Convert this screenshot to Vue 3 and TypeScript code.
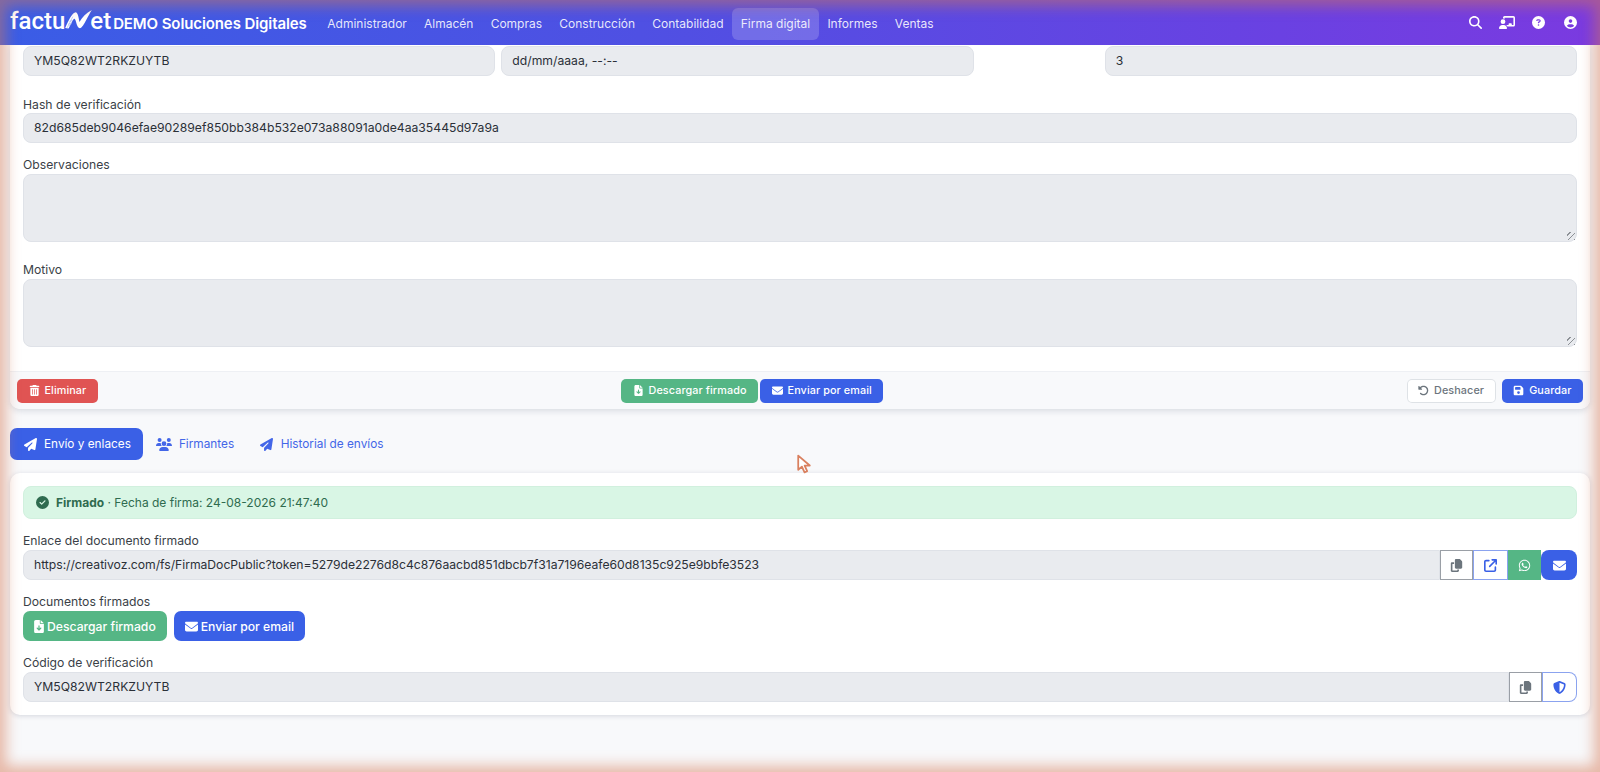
<script setup lang="ts">
const ic = {
  plane: 'M498.1 5.6c10.1 7 15.4 19.1 13.5 31.2l-64 416c-1.5 9.7-7.4 18.2-16 23s-18.9 5.4-28 1.6L284 427.7l-68.5 74.1c-8.9 9.7-22.9 12.9-35.2 8.1S160 493.2 160 480V396.4c0-4 1.5-7.8 4.2-10.7L331.8 202.8c5.8-6.3 5.6-16-.4-22s-15.7-6.4-22-.7L106 360.8 17.7 316.6C7.1 311.3 .3 300.7 0 288.9s5.9-22.8 16.1-28.7l448-256c10.7-6.1 23.9-5.5 34 1.4z',
  users: 'M144 0a80 80 0 1 1 0 160A80 80 0 1 1 144 0zM512 0a80 80 0 1 1 0 160A80 80 0 1 1 512 0zM0 298.7C0 239.8 47.8 192 106.7 192h42.7c15.9 0 31 3.5 44.6 9.7c-1.3 7.2-1.9 14.7-1.9 22.3c0 38.2 16.8 72.5 43.3 96c-.2 0-.4 0-.7 0H21.3C9.6 320 0 310.4 0 298.7zM405.3 320c-.2 0-.4 0-.7 0c26.6-23.5 43.3-57.8 43.3-96c0-7.6-.7-15-1.9-22.3c13.6-6.3 28.7-9.7 44.6-9.7h42.7C592.2 192 640 239.8 640 298.7c0 11.8-9.6 21.3-21.3 21.3H405.3zM224 224a96 96 0 1 1 192 0 96 96 0 1 1 -192 0zM128 485.3C128 411.7 187.7 352 261.3 352H378.7C452.3 352 512 411.7 512 485.3c0 14.7-11.9 26.7-26.7 26.7H154.7c-14.7 0-26.7-11.9-26.7-26.7z',
  mail: 'M48 64C21.5 64 0 85.5 0 112c0 15.1 7.1 29.3 19.2 38.4L236.8 313.6c11.4 8.5 27 8.5 38.4 0L492.8 150.4c12.1-9.1 19.2-23.3 19.2-38.4c0-26.5-21.5-48-48-48H48zM0 176V384c0 35.3 28.7 64 64 64H448c35.3 0 64-28.7 64-64V176L294.4 339.2c-22.8 17.1-54 17.1-76.8 0L0 176z',
  trash: 'M135.2 17.7C140.6 6.8 151.7 0 163.8 0H284.2c12.1 0 23.2 6.8 28.6 17.7L320 32h96c17.7 0 32 14.3 32 32s-14.3 32-32 32H32C14.3 96 0 81.7 0 64S14.3 32 32 32h96l7.2-14.3zM32 128H416V448c0 35.3-28.7 64-64 64H96c-35.3 0-64-28.7-64-64V128zm96 64c-8.8 0-16 7.2-16 16V432c0 8.8 7.2 16 16 16s16-7.2 16-16V208c0-8.8-7.2-16-16-16zm96 0c-8.8 0-16 7.2-16 16V432c0 8.8 7.2 16 16 16s16-7.2 16-16V208c0-8.8-7.2-16-16-16zm96 0c-8.8 0-16 7.2-16 16V432c0 8.8 7.2 16 16 16s16-7.2 16-16V208c0-8.8-7.2-16-16-16z',
  file: 'M64 0C28.7 0 0 28.7 0 64V448c0 35.3 28.7 64 64 64H320c35.3 0 64-28.7 64-64V160H256c-17.7 0-32-14.3-32-32V0H64zM256 0V128H384L256 0zM216 232V334.1l31-31c9.4-9.4 24.6-9.4 33.9 0s9.4 24.6 0 33.9l-72 72c-9.4 9.4-24.6 9.4-33.9 0l-72-72c-9.4-9.4-9.4-24.6 0-33.9s24.6-9.4 33.9 0l31 31V232c0-13.3 10.7-24 24-24s24 10.7 24 24z',
  undo: 'M48.5 224H40c-13.3 0-24-10.7-24-24V72c0-9.7 5.8-18.5 14.8-22.2s19.3-1.7 26.2 5.2L98.6 96.6c87.6-86.5 228.7-86.2 315.8 1c87.5 87.5 87.5 229.3 0 316.8s-229.3 87.5-316.8 0c-12.5-12.5-12.5-32.8 0-45.3s32.8-12.5 45.3 0c62.5 62.5 163.8 62.5 226.3 0s62.5-163.8 0-226.3c-62.2-62.2-162.7-62.5-225.3-1L185 183c6.9 6.9 8.9 17.2 5.2 26.2s-12.5 14.8-22.2 14.8H48.5z',
  save: 'M64 32C28.7 32 0 60.7 0 96V416c0 35.3 28.7 64 64 64H384c35.3 0 64-28.7 64-64V173.3c0-17-6.7-33.3-18.7-45.3L352 50.7C340 38.7 323.7 32 306.7 32H64zm0 96c0-17.7 14.3-32 32-32H288c17.7 0 32 14.3 32 32v64c0 17.7-14.3 32-32 32H96c-17.7 0-32-14.3-32-32V128zM224 288a64 64 0 1 1 0 128 64 64 0 1 1 0-128z',
  check: 'M256 512A256 256 0 1 0 256 0a256 256 0 1 0 0 512zM369 209L241 337c-9.4 9.4-24.6 9.4-33.9 0l-64-64c-9.4-9.4-9.4-24.6 0-33.9s24.6-9.4 33.9 0l47 47L335 175c9.4-9.4 24.6-9.4 33.9 0s9.4 24.6 0 33.9z',
  copy: 'M208 0H332.1c12.7 0 24.9 5.1 33.9 14.1l67.9 67.9c9 9 14.1 21.2 14.1 33.9V336c0 26.5-21.5 48-48 48H208c-26.5 0-48-21.5-48-48V48c0-26.5 21.5-48 48-48zM48 128h80v64H64V448H256V416h64v48c0 26.5-21.5 48-48 48H48c-26.5 0-48-21.5-48-48V176c0-26.5 21.5-48 48-48z',
  ext: 'M320 0c-17.7 0-32 14.3-32 32s14.3 32 32 32h82.7L201.4 265.4c-12.5 12.5-12.5 32.8 0 45.3s32.8 12.5 45.3 0L448 109.3V192c0 17.7 14.3 32 32 32s32-14.3 32-32V32c0-17.7-14.3-32-32-32H320zM80 32C35.8 32 0 67.8 0 112V432c0 44.2 35.8 80 80 80H400c44.2 0 80-35.8 80-80V320c0-17.7-14.3-32-32-32s-32 14.3-32 32V432c0 8.8-7.2 16-16 16H80c-8.8 0-16-7.2-16-16V112c0-8.8 7.2-16 16-16H192c17.7 0 32-14.3 32-32s-14.3-32-32-32H80z',
  wa: 'M380.9 97.1C339 55.1 283.2 32 223.9 32c-122.4 0-222 99.6-222 222 0 39.1 10.2 77.3 29.6 111L0 480l117.7-30.9c32.4 17.7 68.9 27 106.1 27h.1c122.3 0 224.1-99.6 224.1-222 0-59.3-25.2-115-67.1-157zm-157 341.6c-33.2 0-65.7-8.9-94-25.7l-6.7-4-69.8 18.3L72 359.2l-4.4-7c-18.5-29.4-28.2-63.3-28.2-98.2 0-101.7 82.8-184.5 184.6-184.5 49.3 0 95.6 19.2 130.4 54.1 34.8 34.9 56.2 81.2 56.1 130.5 0 101.8-84.9 184.6-186.6 184.6zm101.2-138.2c-5.5-2.8-32.8-16.2-37.9-18-5.1-1.9-8.8-2.8-12.5 2.8-3.7 5.6-14.3 18-17.6 21.8-3.2 3.7-6.5 4.2-12 1.4-32.6-16.3-54-29.1-75.5-66-5.7-9.8 5.7-9.1 16.3-30.3 1.8-3.7.9-6.9-.5-9.7-1.4-2.8-12.5-30.1-17.1-41.2-4.5-10.8-9.1-9.3-12.5-9.5-3.2-.2-6.9-.2-10.6-.2-3.7 0-9.7 1.4-14.8 6.9-5.1 5.6-19.4 19-19.4 46.3 0 27.3 19.9 53.7 22.6 57.4 2.8 3.7 39.1 59.7 94.8 83.8 35.2 15.2 49 16.5 66.6 13.9 10.7-1.6 32.8-13.4 37.4-26.4 4.6-13 4.6-24.1 3.2-26.4-1.3-2.5-5-3.9-10.5-6.6z',
  shield: 'M256 0c4.6 0 9.2 1 13.4 2.9L457.7 82.8c22 9.3 38.4 31 38.3 57.2c-.5 99.2-41.3 280.7-213.6 363.2c-16.7 8-36.1 8-52.8 0C57.3 420.7 16.5 239.2 16 140c-.1-26.2 16.3-47.9 38.3-57.2L242.7 2.9C246.8 1 251.4 0 256 0zm0 66.8V444.8C394 378 431.1 230.1 432 141.4L256 66.8l0 0z',
  search: 'M416 208c0 45.9-14.9 88.3-40 122.7L502.6 457.4c12.5 12.5 12.5 32.8 0 45.3s-32.8 12.5-45.3 0L330.7 376c-34.4 25.2-76.8 40-122.7 40C93.1 416 0 322.9 0 208S93.1 0 208 0S416 93.1 416 208zM208 352a144 144 0 1 0 0-288 144 144 0 1 0 0 288z',
  board: 'M160 64c0-35.3 28.7-64 64-64H576c35.3 0 64 28.7 64 64V352c0 35.3-28.7 64-64 64H336.8c-11.8-25.5-29.9-47.5-52.4-64H384V320c0-17.7 14.3-32 32-32h64c17.7 0 32 14.3 32 32v32h64V64L224 64v49.1C205.2 102.2 183.3 96 160 96V64zm0 64a96 96 0 1 1 0 192 96 96 0 1 1 0-192zM133.3 352h53.3C260.3 352 320 411.7 320 485.3c0 14.7-11.9 26.7-26.7 26.7H26.7C11.9 512 0 500.1 0 485.3C0 411.7 59.7 352 133.3 352z',
  help: 'M256 512A256 256 0 1 0 256 0a256 256 0 1 0 0 512zM169.8 165.3c7.9-22.3 29.1-37.3 52.8-37.3h58.3c34.9 0 63.1 28.3 63.1 63.1c0 22.6-12.1 43.5-31.7 54.8L280 264.4c-.2 13-10.9 23.6-24 23.6c-13.3 0-24-10.7-24-24V250.5c0-8.6 4.6-16.5 12.1-20.8l44.3-25.4c4.7-2.7 7.6-7.7 7.6-13.1c0-8.4-6.8-15.1-15.1-15.1H222.6c-3.4 0-6.4 2.1-7.5 5.3l-.4 1.2c-4.4 12.5-18.2 19-30.6 14.6s-19-18.2-14.6-30.6l.4-1.2zM224 352a32 32 0 1 1 64 0 32 32 0 1 1 -64 0z',
  user: 'M399 384.2C376.9 345.8 335.4 320 288 320H224c-47.4 0-88.9 25.8-111 64.2c35.2 39.2 86.2 63.8 143 63.8s107.8-24.7 143-63.8zM0 256a256 256 0 1 1 512 0A256 256 0 1 1 0 256zm256 16a72 72 0 1 0 0-144 72 72 0 1 0 0 144z',
}
const navItems = ['Administrador', 'Almacén', 'Compras', 'Construcción', 'Contabilidad', 'Firma digital', 'Informes', 'Ventas']
const url = 'https://creativoz.com/fs/FirmaDocPublic?token=5279de2276d8c4c876aacbd851dbcb7f31a7196eafe60d8135c925e9bbfe3523'
</script>

<template>
  <div class="page">
    <header class="nav">
      <div class="logo">
        <span>factu</span>
        <svg class="logo-n" viewBox="0 0 28 20">
          <path fill="#fff" d="M0 19 C3 12 7 3 10.500 2.500 C13.500 2 14 8 15 12.500 C18 7.500 22 3 28 0 C26 3 25 5.500 23.500 8 C21.500 12 19.500 16 17 18.500 C14.500 20.500 12.500 17.500 11.500 13 C10.800 10 10 8.500 9 9.500 C7 12 5.500 16 3.500 19.500 Z" />
          <path fill="none" stroke="#9fb2f2" stroke-width=".7" d="M2 18.800 L8 7 M4 17 L6 15 M3 15 L7 14 M4.500 12 L8 11" />
        </svg>
        <span>et</span>
      </div>
      <span class="brand">DEMO Soluciones Digitales</span>
      <nav class="menu">
        <a v-for="n in navItems" :key="n" :class="{ on: n === 'Firma digital' }">{{ n }}</a>
      </nav>
      <div class="tools">
        <svg viewBox="0 0 512 512"><path :d="ic.search" /></svg>
        <svg class="wide" viewBox="0 0 640 512"><path :d="ic.board" /></svg>
        <svg viewBox="0 0 512 512"><path :d="ic.help" /></svg>
        <svg class="end" viewBox="0 0 512 512"><path :d="ic.user" /></svg>
      </div>
    </header>

    <main class="content">
      <section class="form-card">
        <div class="form-body">
          <div class="row-top">
            <div class="fake">YM5Q82WT2RKZUYTB</div>
            <div class="fake">dd/mm/aaaa, --:--</div>
            <div></div>
            <div class="fake">3</div>
          </div>
          <label class="lab hash">Hash de verificación</label>
          <div class="fake">82d685deb9046efae90289ef850bb384b532e073a88091a0de4aa35445d97a9a</div>
          <label class="lab near">Observaciones</label>
          <div class="fake area"><i class="grip"></i></div>
          <label class="lab">Motivo</label>
          <div class="fake area"><i class="grip"></i></div>
        </div>
        <div class="form-foot">
          <button class="sm red"><svg viewBox="0 0 448 512"><path :d="ic.trash" /></svg>Eliminar</button>
          <div class="foot-group mid">
            <button class="sm green"><svg viewBox="0 0 384 512"><path :d="ic.file" /></svg>Descargar firmado</button>
            <button class="sm blue"><svg viewBox="0 0 512 512"><path :d="ic.mail" /></svg>Enviar por email</button>
          </div>
          <div class="foot-group">
            <button class="sm ghost"><svg viewBox="0 0 512 512"><path :d="ic.undo" /></svg>Deshacer</button>
            <button class="sm blue"><svg viewBox="0 0 448 512"><path :d="ic.save" /></svg>Guardar</button>
          </div>
        </div>
      </section>

      <div class="tabs">
        <a class="tab active"><svg class="t-plane" viewBox="0 0 512 512"><path :d="ic.plane" /></svg>Envío y enlaces</a>
        <a class="tab"><svg class="t-wide" viewBox="0 0 640 512"><path :d="ic.users" /></svg>Firmantes</a>
        <a class="tab"><svg class="t-plane" viewBox="0 0 512 512"><path :d="ic.plane" /></svg>Historial de envíos</a>
      </div>

      <section class="send-card">
        <div class="alert">
          <svg viewBox="0 0 512 512"><path :d="ic.check" /></svg>
          <b>Firmado</b>
          <span>&nbsp;· Fecha de firma: 24-08-2026 21:47:40</span>
        </div>
        <label class="lab tight">Enlace del documento firmado</label>
        <div class="group">
          <div class="fake grow link">{{ url }}</div>
          <button class="ib gray"><svg viewBox="0 0 448 512"><path :d="ic.copy" /></svg></button>
          <button class="ib outline"><svg viewBox="0 0 512 512"><path :d="ic.ext" /></svg></button>
          <button class="ib wa"><svg viewBox="0 0 448 512"><path :d="ic.wa" /></svg></button>
          <button class="ib mail"><svg viewBox="0 0 512 512"><path :d="ic.mail" /></svg></button>
        </div>
        <label class="lab tight">Documentos firmados</label>
        <div class="docs">
          <button class="md green"><svg class="narrow" viewBox="0 0 384 512"><path :d="ic.file" /></svg>Descargar firmado</button>
          <button class="md blue"><svg viewBox="0 0 512 512"><path :d="ic.mail" /></svg>Enviar por email</button>
        </div>
        <label class="lab tight">Código de verificación</label>
        <div class="group">
          <div class="fake grow">YM5Q82WT2RKZUYTB</div>
          <button class="ib gray"><svg viewBox="0 0 448 512"><path :d="ic.copy" /></svg></button>
          <button class="ib outline last"><svg viewBox="0 0 512 512"><path :d="ic.shield" /></svg></button>
        </div>
      </section>
    </main>

    <svg class="cursor" viewBox="0 0 14 20">
      <path d="M1.500 1.500 L1.500 15 L5 12 L7.500 17.500 L10 16.400 L7.600 11 L12.500 11 Z" fill="#fff" stroke="#d9805f" stroke-width="1.700" stroke-linejoin="round" />
    </svg>
    <div class="glow"></div>
  </div>
</template>

<style>
html, body { margin: 0; background: #f8f9fb; }
</style>

<style scoped>
.page {
  position: relative;
  width: 1600px;
  height: 772px;
  overflow: hidden;
  background: #f8f9fb;
  font-family: Inter, "Liberation Sans", sans-serif;
  font-size: 12.200px;
  color: #2b3038;
}
svg { fill: currentColor; display: block; flex: none; }

.nav {
  display: flex;
  align-items: center;
  height: 45px;
  padding: 3px 10px 0;
  box-sizing: border-box;
  color: #fff;
  background: linear-gradient(90deg, #3a5de6 0%, #4f50e3 40%, #6a41e2 80%, #7b3ae0 100%);
  position: relative;
  z-index: 2;
}
.logo {
  display: flex;
  align-items: center;
  font-family: Roboto, sans-serif;
  font-size: 24px;
  font-weight: 500;
  margin-top: -7px;
}
.logo-n { width: 27px; height: 19px; margin: -3px -2px 0 0; }
.brand { margin-left: 2px; margin-top: -2px; font-size: 15px; font-weight: 600; letter-spacing: -.1px; }
.menu { display: flex; margin-left: 12px; }
.menu a {
  padding: 0 8.600px;
  height: 32px;
  line-height: 32px;
  border-radius: 6px;
  font-size: 12px;
  color: rgba(255, 255, 255, .88);
}
.menu a.on { background: rgba(255, 255, 255, .18); }
.tools { margin-left: auto; display: flex; align-items: center; gap: 17px; padding-right: 13px; margin-top: -4px; }
.tools svg { width: 13px; height: 13px; }
.tools svg.wide { width: 16px; }
.tools svg.end { margin-left: 2px; }

.content { padding: 0 10px; }

.form-card {
  background: #fff;
  border-radius: 0 0 10px 10px;
  box-shadow: 0 2px 6px rgba(30, 40, 70, .14);
}
.form-body { padding: 1px 13px 24px; }
.row-top { display: grid; grid-template-columns: 1fr 1fr 119px 1fr; gap: 6px; }
.fake {
  box-sizing: border-box;
  height: 30px;
  line-height: 28px;
  padding: 0 10px;
  background: #e9ebef;
  border: 1px solid #dfe2e8;
  border-radius: 8px;
  color: #2b3038;
  white-space: nowrap;
}
.link { letter-spacing: -.03px; }
.area { height: 68px; position: relative; }
.grip {
  position: absolute; right: 1px; bottom: 1px; width: 8px; height: 8px;
  background: repeating-linear-gradient(135deg, transparent 0 2px, #8d9196 2px 3px, transparent 3px 4px);
}
.lab { display: block; height: 16px; line-height: 16px; margin: 20px 0 1px; color: #3a3f47; }
.lab.hash { margin: 21px 0 0; }
.lab.near { margin: 14px 0 1px; }
.lab.tight { margin: 14px 0 1px; }

.form-foot {
  display: flex;
  justify-content: space-between;
  align-items: center;
  height: 38px;
  padding: 0 7px;
  box-sizing: border-box;
  background: #f8f9fb;
  border-top: 1px solid #eef0f4;
  border-radius: 0 0 10px 10px;
}
.foot-group { display: flex; gap: 6px; }
.foot-group.mid { gap: 2px; }

button { font-family: inherit; border: 0; cursor: default; }
.sm {
  display: flex;
  align-items: center;
  gap: 5px;
  height: 24px;
  padding: 0 11.500px;
  border-radius: 5px;
  font-size: 10.800px;
  font-weight: 500;
  letter-spacing: .1px;
}
.sm svg { width: 11px; height: 11px; }
.red { background: #e05453; color: #fff; }
.green { background: #55b685; color: #fff; }
.blue { background: #3a60e6; color: #fff; }
.ghost { background: #fff; color: #6c757d; box-shadow: inset 0 0 0 1px #dee2e6; }

.tabs { display: flex; margin-top: 19px; }
.tab {
  display: flex;
  align-items: center;
  gap: 7px;
  height: 32px;
  padding: 0 12.500px;
  border-radius: 7px;
  color: #4366e8;
  font-size: 11.800px;
}
.tab svg { width: 13px; height: 13px; }
.tab svg.t-plane { margin: 0 .5px 0 1px; }
.tab svg.t-wide { width: 16px; }
.tab.active { background: #3a60e6; color: #fff; }

.send-card {
  margin-top: 13px;
  height: 242px;
  box-sizing: border-box;
  padding: 13px 13px 0;
  background: #fff;
  border-radius: 10px;
  box-shadow: 0 1px 5px rgba(30, 40, 70, .16);
}
.alert {
  display: flex;
  align-items: center;
  height: 33px;
  padding: 0 12px;
  box-sizing: border-box;
  background: #d9f6e5;
  border: 1px solid #d1f0de;
  border-radius: 8px;
  color: #2f6b4f;
  font-size: 12px;
}
.alert svg { width: 13px; height: 13px; margin-right: 7px; }
.group { display: flex; height: 30px; }
.grow { flex: 1; border-radius: 8px 0 0 8px; overflow: hidden; }
.ib {
  width: 33px;
  height: 30px;
  padding: 0;
  display: flex;
  align-items: center;
  justify-content: center;
  background: #fff;
}
.ib svg { width: 13px; height: 13px; }
.ib.gray { color: #6c757d; box-shadow: inset 0 0 0 1px #9a9fa6; }
.ib.outline { color: #3a60e6; box-shadow: inset 0 0 0 1px #8ba3ef; width: 35px; }
.ib.outline.last { border-radius: 0 8px 8px 0; }
.ib.wa { background: #55b685; color: #fff; }
.ib.mail { background: #3a60e6; color: #fff; width: 36px; border-radius: 8px; }
.docs { display: flex; gap: 7px; }
.md {
  display: flex;
  align-items: center;
  gap: 3px;
  height: 30px;
  padding: 0 11px;
  border-radius: 7px;
  font-size: 12.200px;
  font-weight: 500;
}
.md svg { width: 13px; height: 13px; }
.md svg.narrow { width: 10px; }

.cursor { position: absolute; left: 796px; top: 454px; width: 16px; height: 21px; }
.glow {
  position: absolute;
  inset: 0;
  pointer-events: none;
  z-index: 5;
  box-shadow: inset 0 0 14px 6px rgba(214, 120, 84, .5);
}
</style>
